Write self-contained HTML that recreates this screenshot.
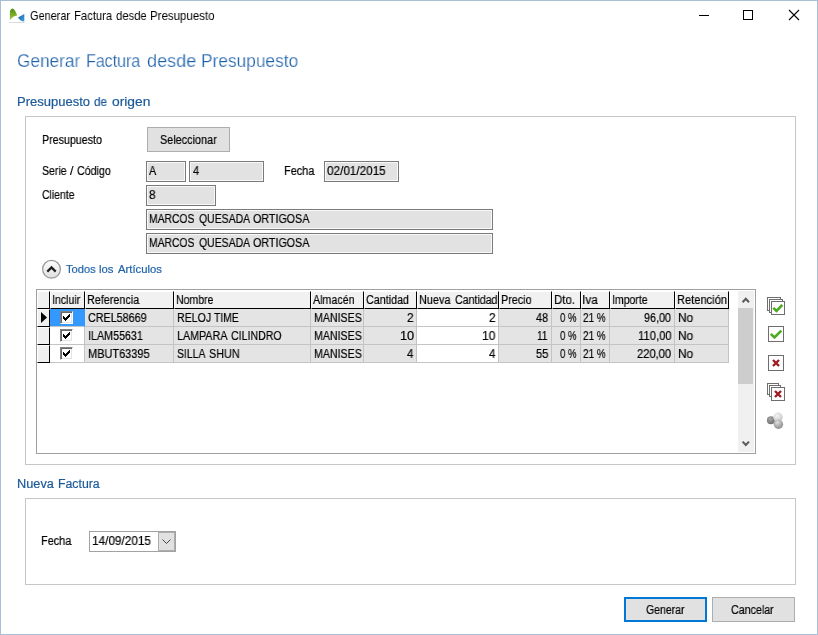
<!DOCTYPE html>
<html><head><meta charset="utf-8">
<style>
html,body{margin:0;padding:0;}
body{width:818px;height:635px;overflow:hidden;background:#fff;font-family:"Liberation Sans",sans-serif;font-size:12px;color:#000;position:relative;}
div,span{position:absolute;white-space:nowrap;box-sizing:border-box;}
.win{left:0;top:0;width:818px;height:635px;border:1px solid #a9bfd9;background:#fff;}
.t{line-height:20px;height:20px;transform-origin:0 0;will-change:transform;-webkit-text-stroke:0.2px currentColor;}
.grp{border:1px solid #c6c6c6;background:#fff;}
.tf{border:1px solid #7a7a7a;background:#e2e2e2;height:21px;box-shadow:inset 0 0 0 1px #f8f8f8;}
.btn{border:1px solid #adadad;background:#e1e1e1;height:25px;}
.grid{left:36px;top:289px;width:720px;height:165px;border:1px solid #a0a0a0;background:#fff;}
.hc{top:291px;height:18px;background:#f1f1f1;border-right:1px solid #000;border-bottom:1px solid #000;border-left:1px solid #fff;border-top:1px solid #fff;}
.c{height:18px;background:#e4e4e4;border-right:1px solid #c4c4c4;border-bottom:1px solid #c4c4c4;}
.c.w{background:#fff;}
.rh{left:37px;width:13px;height:18px;background:#f0f0f0;border-right:1px solid #000;border-bottom:1px solid #000;border-top:1px solid #fff;border-left:1px solid #fff;}
.cb{width:13px;height:13px;border:1px solid #808080;border-right-color:#fff;border-bottom-color:#fff;background:#fff;box-shadow:inset 1px 1px 0 #696969, inset -1px -1px 0 #e3e3e3;}
svg{position:absolute;overflow:visible;}
</style></head><body>
<div class="win"></div>
<svg style="left:8px;top:7px" width="18" height="17" viewBox="0 0 18 17">
<defs><linearGradient id="g1" x1="0" y1="0" x2="0" y2="1"><stop offset="0" stop-color="#4f8f14"/><stop offset="1" stop-color="#9cc93c"/></linearGradient>
<linearGradient id="g2" x1="0" y1="0" x2="1" y2="1"><stop offset="0" stop-color="#1b5fa8"/><stop offset="1" stop-color="#3fa0dc"/></linearGradient></defs>
<path d="M1.9 13.2 L1.9 4.2 Q2.8 1.4 4.6 1.6 Q7.2 2.6 9.1 8.6 Q5 9 1.9 13.2Z" fill="url(#g1)"/>
<path d="M10 10.4 L16.3 6.9 L16.3 14.5 Q12.4 14.2 10 10.4Z" fill="url(#g2)"/>
<rect x="1" y="15" width="15.5" height="0.8" fill="#d4d4d4"/>
</svg>
<div class="t" style="left:30.35px;top:5.80px;font-size:12.4px;color:#000;transform:scaleX(0.8814);-webkit-text-stroke:0;">Generar</div>
<div class="t" style="left:73.80px;top:5.80px;font-size:12.4px;color:#000;transform:scaleX(0.9098);-webkit-text-stroke:0;">Factura</div>
<div class="t" style="left:116.25px;top:5.80px;font-size:12.4px;color:#000;transform:scaleX(0.9116);-webkit-text-stroke:0;">desde</div>
<div class="t" style="left:150.08px;top:5.80px;font-size:12.4px;color:#000;transform:scaleX(0.9275);-webkit-text-stroke:0;">Presupuesto</div>
<svg style="left:690px;top:5px" width="120" height="22" viewBox="0 0 120 22">
<path d="M9 10.5H19" stroke="#000" stroke-width="1" fill="none"/>
<rect x="53.5" y="5.5" width="9" height="9" stroke="#000" stroke-width="1" fill="none"/>
<path d="M99 5L109 15M109 5L99 15" stroke="#000" stroke-width="1.1" fill="none"/>
</svg>
<div class="t" style="left:17.04px;top:50.66px;font-size:18.3px;color:#1c5fa9;transform:scaleX(0.9428);-webkit-text-stroke:0.25px #fff;">Generar</div>
<div class="t" style="left:86.12px;top:50.66px;font-size:18.3px;color:#1c5fa9;transform:scaleX(0.8753);-webkit-text-stroke:0.25px #fff;">Factura</div>
<div class="t" style="left:147.08px;top:50.66px;font-size:18.3px;color:#1c5fa9;transform:scaleX(0.9875);-webkit-text-stroke:0.25px #fff;">desde</div>
<div class="t" style="left:201.41px;top:50.66px;font-size:18.3px;color:#1c5fa9;transform:scaleX(0.9467);-webkit-text-stroke:0.25px #fff;">Presupuesto</div>
<div class="t" style="left:16.66px;top:91.74px;font-size:12.3px;color:#1c5a9a;transform:scaleX(1.0579);">Presupuesto</div>
<div class="t" style="left:94.23px;top:91.74px;font-size:12.3px;color:#1c5a9a;transform:scaleX(0.9551);">de</div>
<div class="t" style="left:112.15px;top:91.74px;font-size:12.3px;color:#1c5a9a;transform:scaleX(1.1224);">origen</div>
<div class="grp" style="left:25px;top:116px;width:771px;height:349px;"></div>
<div class="t" style="left:41.75px;top:129.57px;font-size:12.5px;color:#000;transform:scaleX(0.8546);">Presupuesto</div>
<div class="btn" style="left:147px;top:127px;width:83px;"></div>
<div class="t" style="left:160.01px;top:130.17px;font-size:12.5px;color:#000;transform:scaleX(0.8674);">Seleccionar</div>
<div class="t" style="left:42.13px;top:161.47px;font-size:12.5px;color:#000;transform:scaleX(0.8427);">Serie</div>
<div class="t" style="left:70.20px;top:161.47px;font-size:12.5px;color:#000;transform:scaleX(0.9714);">/</div>
<div class="t" style="left:77.07px;top:161.47px;font-size:12.5px;color:#000;transform:scaleX(0.8519);">Código</div>
<div class="tf" style="left:146px;top:161px;width:40px;"></div>
<div class="t" style="left:149.00px;top:160.67px;font-size:12.5px;color:#000;transform:scaleX(0.8662);">A</div>
<div class="tf" style="left:189px;top:161px;width:75px;"></div>
<div class="t" style="left:192.58px;top:160.67px;font-size:12.5px;color:#000;transform:scaleX(0.8784);">4</div>
<div class="t" style="left:283.82px;top:161.27px;font-size:12.5px;color:#000;transform:scaleX(0.8754);">Fecha</div>
<div class="tf" style="left:324px;top:161px;width:75px;"></div>
<div class="t" style="left:327.09px;top:160.67px;font-size:12.5px;color:#000;transform:scaleX(0.9379);">02/01/2015</div>
<div class="t" style="left:42.08px;top:185.27px;font-size:12.5px;color:#000;transform:scaleX(0.8344);">Cliente</div>
<div class="tf" style="left:146px;top:185px;width:70px;"></div>
<div class="t" style="left:149.33px;top:184.67px;font-size:12.5px;color:#000;transform:scaleX(0.9432);">8</div>
<div class="tf" style="left:146px;top:209px;width:347px;"></div>
<div class="t" style="left:148.67px;top:208.67px;font-size:12.5px;color:#000;transform:scaleX(0.8272);">MARCOS</div>
<div class="t" style="left:198.53px;top:208.67px;font-size:12.5px;color:#000;transform:scaleX(0.8372);">QUESADA</div>
<div class="t" style="left:252.82px;top:208.67px;font-size:12.5px;color:#000;transform:scaleX(0.8575);">ORTIGOSA</div>
<div class="tf" style="left:146px;top:233px;width:347px;"></div>
<div class="t" style="left:148.67px;top:232.67px;font-size:12.5px;color:#000;transform:scaleX(0.8272);">MARCOS</div>
<div class="t" style="left:198.53px;top:232.67px;font-size:12.5px;color:#000;transform:scaleX(0.8372);">QUESADA</div>
<div class="t" style="left:252.82px;top:232.67px;font-size:12.5px;color:#000;transform:scaleX(0.8575);">ORTIGOSA</div>
<svg style="left:41px;top:259.45px" width="21" height="21" viewBox="0 0 21 21">
<defs><linearGradient id="g3" x1="0" y1="0" x2="0" y2="1"><stop offset="0" stop-color="#ffffff"/><stop offset="1" stop-color="#dedede"/></linearGradient></defs>
<circle cx="10.5" cy="10.3" r="8.9" fill="url(#g3)" stroke="#969696" stroke-width="1.2"/>
<path d="M6.3 12.6L10.5 8.4L14.7 12.6" stroke="#1e1e1e" stroke-width="2.2" fill="none"/>
</svg>
<div class="t" style="left:66.28px;top:259.42px;font-size:11.2px;color:#1d62a8;transform:scaleX(0.9936);">Todos</div>
<div class="t" style="left:99.36px;top:259.42px;font-size:11.2px;color:#1d62a8;transform:scaleX(1.0139);">los</div>
<div class="t" style="left:117.60px;top:259.42px;font-size:11.2px;color:#1d62a8;transform:scaleX(1.0075);">Artículos</div>
<div class="grid"></div>
<div class="hc" style="left:37px;width:13px;"></div>
<div class="hc" style="left:50px;width:35px;"></div>
<div class="hc" style="left:85px;width:89px;"></div>
<div class="hc" style="left:174px;width:137px;"></div>
<div class="hc" style="left:311px;width:53px;"></div>
<div class="hc" style="left:364px;width:53px;"></div>
<div class="hc" style="left:417px;width:82px;"></div>
<div class="hc" style="left:499px;width:53px;"></div>
<div class="hc" style="left:552px;width:29px;"></div>
<div class="hc" style="left:581px;width:29px;"></div>
<div class="hc" style="left:610px;width:65px;"></div>
<div class="hc" style="left:675px;width:54px;"></div>
<div class="t" style="left:51.65px;top:289.67px;font-size:12.5px;color:#000;transform:scaleX(0.8421);">Incluir</div>
<div class="t" style="left:87.04px;top:289.67px;font-size:12.5px;color:#000;transform:scaleX(0.8622);">Referencia</div>
<div class="t" style="left:176.16px;top:289.67px;font-size:12.5px;color:#000;transform:scaleX(0.8408);">Nombre</div>
<div class="t" style="left:313.30px;top:289.67px;font-size:12.5px;color:#000;transform:scaleX(0.8543);">Almacén</div>
<div class="t" style="left:366.16px;top:289.67px;font-size:12.5px;color:#000;transform:scaleX(0.8576);">Cantidad</div>
<div class="t" style="left:419.33px;top:289.67px;font-size:12.5px;color:#000;transform:scaleX(0.8696);">Nueva</div>
<div class="t" style="left:454.87px;top:289.67px;font-size:12.5px;color:#000;transform:scaleX(0.8473);">Cantidad</div>
<div class="t" style="left:500.84px;top:289.67px;font-size:12.5px;color:#000;transform:scaleX(0.8634);">Precio</div>
<div class="t" style="left:553.68px;top:289.67px;font-size:12.5px;color:#000;transform:scaleX(0.9177);">Dto.</div>
<div class="t" style="left:581.93px;top:289.67px;font-size:12.5px;color:#000;transform:scaleX(0.9472);">Iva</div>
<div class="t" style="left:611.66px;top:289.67px;font-size:12.5px;color:#000;transform:scaleX(0.8393);">Importe</div>
<div class="t" style="left:676.81px;top:289.67px;font-size:12.5px;color:#000;transform:scaleX(0.8881);">Retención</div>
<div class="rh" style="top:309px;"></div>
<div class="c w" style="left:50px;top:309px;width:35px;background:#3399ff;border-right-color:#3399ff;"></div>
<div class="c" style="left:85px;top:309px;width:89px;"></div>
<div class="c" style="left:174px;top:309px;width:137px;"></div>
<div class="c" style="left:311px;top:309px;width:53px;"></div>
<div class="c" style="left:364px;top:309px;width:53px;"></div>
<div class="c w" style="left:417px;top:309px;width:82px;"></div>
<div class="c" style="left:499px;top:309px;width:53px;"></div>
<div class="c" style="left:552px;top:309px;width:29px;"></div>
<div class="c" style="left:581px;top:309px;width:29px;"></div>
<div class="c" style="left:610px;top:309px;width:65px;"></div>
<div class="c" style="left:675px;top:309px;width:54px;"></div>
<div class="cb" style="left:60px;top:311px;"></div>
<svg style="left:60px;top:311px" width="13" height="13" viewBox="0 0 13 13" shape-rendering="crispEdges"><rect x="3" y="5" width="1" height="3"/><rect x="4" y="6" width="1" height="3"/><rect x="5" y="7" width="1" height="3"/><rect x="6" y="6" width="1" height="3"/><rect x="7" y="5" width="1" height="3"/><rect x="8" y="4" width="1" height="3"/><rect x="9" y="3" width="1" height="3"/></svg>
<div class="t" style="left:88.16px;top:307.67px;font-size:12.5px;color:#000;transform:scaleX(0.8598);">CREL58669</div>
<div class="t" style="left:176.75px;top:307.67px;font-size:12.5px;color:#000;transform:scaleX(0.8507);">RELOJ</div>
<div class="t" style="left:214.49px;top:307.67px;font-size:12.5px;color:#000;transform:scaleX(0.8292);">TIME</div>
<div class="t" style="left:313.85px;top:307.67px;font-size:12.5px;color:#000;transform:scaleX(0.8493);">MANISES</div>
<div class="t" style="left:407.31px;top:307.67px;font-size:12.5px;color:#000;transform:scaleX(0.9391);">2</div>
<div class="t" style="left:489.01px;top:307.67px;font-size:12.5px;color:#000;transform:scaleX(0.9391);">2</div>
<div class="t" style="left:536.18px;top:307.67px;font-size:12.5px;color:#000;transform:scaleX(0.8686);">48</div>
<div class="t" style="left:560.27px;top:307.67px;font-size:12.5px;color:#000;transform:scaleX(0.7637);">0 %</div>
<div class="t" style="left:583.11px;top:307.67px;font-size:12.5px;color:#000;transform:scaleX(0.7909);">21 %</div>
<div class="t" style="left:644.32px;top:307.67px;font-size:12.5px;color:#000;transform:scaleX(0.8595);">96,00</div>
<div class="t" style="left:677.55px;top:307.67px;font-size:12.5px;color:#000;transform:scaleX(0.9489);">No</div>
<div class="rh" style="top:327px;"></div>
<div class="c w" style="left:50px;top:327px;width:35px;"></div>
<div class="c" style="left:85px;top:327px;width:89px;"></div>
<div class="c" style="left:174px;top:327px;width:137px;"></div>
<div class="c" style="left:311px;top:327px;width:53px;"></div>
<div class="c" style="left:364px;top:327px;width:53px;"></div>
<div class="c w" style="left:417px;top:327px;width:82px;"></div>
<div class="c" style="left:499px;top:327px;width:53px;"></div>
<div class="c" style="left:552px;top:327px;width:29px;"></div>
<div class="c" style="left:581px;top:327px;width:29px;"></div>
<div class="c" style="left:610px;top:327px;width:65px;"></div>
<div class="c" style="left:675px;top:327px;width:54px;"></div>
<div class="cb" style="left:60px;top:329px;"></div>
<svg style="left:60px;top:329px" width="13" height="13" viewBox="0 0 13 13" shape-rendering="crispEdges"><rect x="3" y="5" width="1" height="3"/><rect x="4" y="6" width="1" height="3"/><rect x="5" y="7" width="1" height="3"/><rect x="6" y="6" width="1" height="3"/><rect x="7" y="5" width="1" height="3"/><rect x="8" y="4" width="1" height="3"/><rect x="9" y="3" width="1" height="3"/></svg>
<div class="t" style="left:87.73px;top:325.67px;font-size:12.5px;color:#000;transform:scaleX(0.8578);">ILAM55631</div>
<div class="t" style="left:176.74px;top:325.67px;font-size:12.5px;color:#000;transform:scaleX(0.8579);">LAMPARA</div>
<div class="t" style="left:231.07px;top:325.67px;font-size:12.5px;color:#000;transform:scaleX(0.8479);">CILINDRO</div>
<div class="t" style="left:313.85px;top:325.67px;font-size:12.5px;color:#000;transform:scaleX(0.8493);">MANISES</div>
<div class="t" style="left:399.54px;top:325.67px;font-size:12.5px;color:#000;transform:scaleX(1.0240);">10</div>
<div class="t" style="left:482.10px;top:325.67px;font-size:12.5px;color:#000;transform:scaleX(0.9600);">10</div>
<div class="t" style="left:536.75px;top:325.67px;font-size:12.5px;color:#000;transform:scaleX(0.8044);">11</div>
<div class="t" style="left:560.27px;top:325.67px;font-size:12.5px;color:#000;transform:scaleX(0.7637);">0 %</div>
<div class="t" style="left:583.11px;top:325.67px;font-size:12.5px;color:#000;transform:scaleX(0.7909);">21 %</div>
<div class="t" style="left:637.55px;top:325.67px;font-size:12.5px;color:#000;transform:scaleX(0.9016);">110,00</div>
<div class="t" style="left:677.55px;top:325.67px;font-size:12.5px;color:#000;transform:scaleX(0.9489);">No</div>
<div class="rh" style="top:345px;"></div>
<div class="c w" style="left:50px;top:345px;width:35px;"></div>
<div class="c" style="left:85px;top:345px;width:89px;"></div>
<div class="c" style="left:174px;top:345px;width:137px;"></div>
<div class="c" style="left:311px;top:345px;width:53px;"></div>
<div class="c" style="left:364px;top:345px;width:53px;"></div>
<div class="c w" style="left:417px;top:345px;width:82px;"></div>
<div class="c" style="left:499px;top:345px;width:53px;"></div>
<div class="c" style="left:552px;top:345px;width:29px;"></div>
<div class="c" style="left:581px;top:345px;width:29px;"></div>
<div class="c" style="left:610px;top:345px;width:65px;"></div>
<div class="c" style="left:675px;top:345px;width:54px;"></div>
<div class="cb" style="left:60px;top:347px;"></div>
<svg style="left:60px;top:347px" width="13" height="13" viewBox="0 0 13 13" shape-rendering="crispEdges"><rect x="3" y="5" width="1" height="3"/><rect x="4" y="6" width="1" height="3"/><rect x="5" y="7" width="1" height="3"/><rect x="6" y="6" width="1" height="3"/><rect x="7" y="5" width="1" height="3"/><rect x="8" y="4" width="1" height="3"/><rect x="9" y="3" width="1" height="3"/></svg>
<div class="t" style="left:87.82px;top:343.67px;font-size:12.5px;color:#000;transform:scaleX(0.8779);">MBUT63395</div>
<div class="t" style="left:177.13px;top:343.67px;font-size:12.5px;color:#000;transform:scaleX(0.8344);">SILLA</div>
<div class="t" style="left:209.11px;top:343.67px;font-size:12.5px;color:#000;transform:scaleX(0.8649);">SHUN</div>
<div class="t" style="left:313.85px;top:343.67px;font-size:12.5px;color:#000;transform:scaleX(0.8493);">MANISES</div>
<div class="t" style="left:407.27px;top:343.67px;font-size:12.5px;color:#000;transform:scaleX(0.9098);">4</div>
<div class="t" style="left:488.97px;top:343.67px;font-size:12.5px;color:#000;transform:scaleX(0.9098);">4</div>
<div class="t" style="left:535.96px;top:343.67px;font-size:12.5px;color:#000;transform:scaleX(0.8854);">55</div>
<div class="t" style="left:560.27px;top:343.67px;font-size:12.5px;color:#000;transform:scaleX(0.7637);">0 %</div>
<div class="t" style="left:583.11px;top:343.67px;font-size:12.5px;color:#000;transform:scaleX(0.7909);">21 %</div>
<div class="t" style="left:637.04px;top:343.67px;font-size:12.5px;color:#000;transform:scaleX(0.8928);">220,00</div>
<div class="t" style="left:677.55px;top:343.67px;font-size:12.5px;color:#000;transform:scaleX(0.9489);">No</div>
<svg style="left:41px;top:312px" width="7" height="12" viewBox="0 0 7 12"><path d="M0 0L6 5.5L0 11Z" fill="#000"/></svg>
<div style="left:738px;top:291px;width:16px;height:161px;background:#f0f0f0;"></div>
<div style="left:738px;top:308px;width:15px;height:76px;background:#cdcdcd;"></div>
<svg style="left:738px;top:291px" width="16" height="161" viewBox="0 0 16 161"><path d="M4.6 11.2L7.8 7.8L11 11.2" stroke="#5c5c5c" stroke-width="2.1" fill="none"/><path d="M4.6 150.6L7.8 154L11 150.6" stroke="#5c5c5c" stroke-width="2.1" fill="none"/></svg>
<svg style="left:766px;top:296px" width="20" height="136" viewBox="0 0 20 136">
<g fill="#fff" stroke="#6e6e6e" stroke-width="1">
<rect x="1.5" y="1.5" width="13" height="13"/><rect x="3.5" y="3.5" width="13" height="13"/><rect x="5.5" y="5.5" width="13" height="13"/>
<rect x="2.5" y="30.5" width="15" height="15"/>
<rect x="2.5" y="59.5" width="15" height="15"/>
<rect x="1.5" y="87.5" width="11" height="11"/><rect x="3.5" y="89.5" width="11" height="11"/><rect x="5.5" y="91.5" width="13" height="13"/>
</g>
<path d="M7.3 11.8L10.5 15L16.3 8.8" stroke="#4cab1c" stroke-width="2.6" fill="none"/>
<path d="M4.8 37.8L8.5 41.5L15.3 34.7" stroke="#4cab1c" stroke-width="2.6" fill="none"/>
<path d="M7 64L13 70M13 64L7 70" stroke="#9c1c24" stroke-width="2.4" fill="none"/>
<path d="M9 95L15 101M15 95L9 101" stroke="#9c1c24" stroke-width="2.4" fill="none"/>
<defs><radialGradient id="b1" cx="0.4" cy="0.35" r="0.7"><stop offset="0" stop-color="#a8a8a8"/><stop offset="1" stop-color="#6c6c6c"/></radialGradient>
<radialGradient id="b2" cx="0.4" cy="0.35" r="0.7"><stop offset="0" stop-color="#f4f4f4"/><stop offset="1" stop-color="#c4c4c4"/></radialGradient>
<radialGradient id="b3" cx="0.4" cy="0.3" r="0.7"><stop offset="0" stop-color="#e0e0e0"/><stop offset="1" stop-color="#8a8a8a"/></radialGradient></defs>
<circle cx="4.9" cy="124.2" r="4" fill="url(#b1)"/>
<circle cx="12" cy="121.3" r="4.7" fill="url(#b2)"/>
<circle cx="12.4" cy="128.3" r="4.7" fill="url(#b3)"/>
</svg>
<div class="t" style="left:16.78px;top:473.64px;font-size:12.3px;color:#1c5a9a;transform:scaleX(1.0368);">Nueva</div>
<div class="t" style="left:58.13px;top:473.64px;font-size:12.3px;color:#1c5a9a;transform:scaleX(0.9884);">Factura</div>
<div class="grp" style="left:25px;top:498px;width:771px;height:87px;"></div>
<div class="t" style="left:40.83px;top:531.47px;font-size:12.5px;color:#000;transform:scaleX(0.8725);">Fecha</div>
<div style="left:89px;top:531px;width:87px;height:21px;border:1px solid #a2a2a2;background:#fff;"></div>
<div style="left:158px;top:532px;width:17px;height:19px;background:#e1e1e1;border:1px solid #adadad;"></div>
<svg style="left:161px;top:538px" width="11" height="7" viewBox="0 0 11 7"><path d="M1.5 1.5L5.5 5.5L9.5 1.5" stroke="#444" stroke-width="1" fill="none"/></svg>
<div class="t" style="left:91.52px;top:530.67px;font-size:12.5px;color:#000;transform:scaleX(0.9423);">14/09/2015</div>
<div class="btn" style="left:624px;top:597px;width:83px;border:2px solid #0078d7;"></div>
<div class="t" style="left:645.88px;top:600.17px;font-size:12.5px;color:#000;transform:scaleX(0.8388);">Generar</div>
<div class="btn" style="left:712px;top:597px;width:83px;"></div>
<div class="t" style="left:731.47px;top:600.17px;font-size:12.5px;color:#000;transform:scaleX(0.8528);">Cancelar</div>
</body></html>
